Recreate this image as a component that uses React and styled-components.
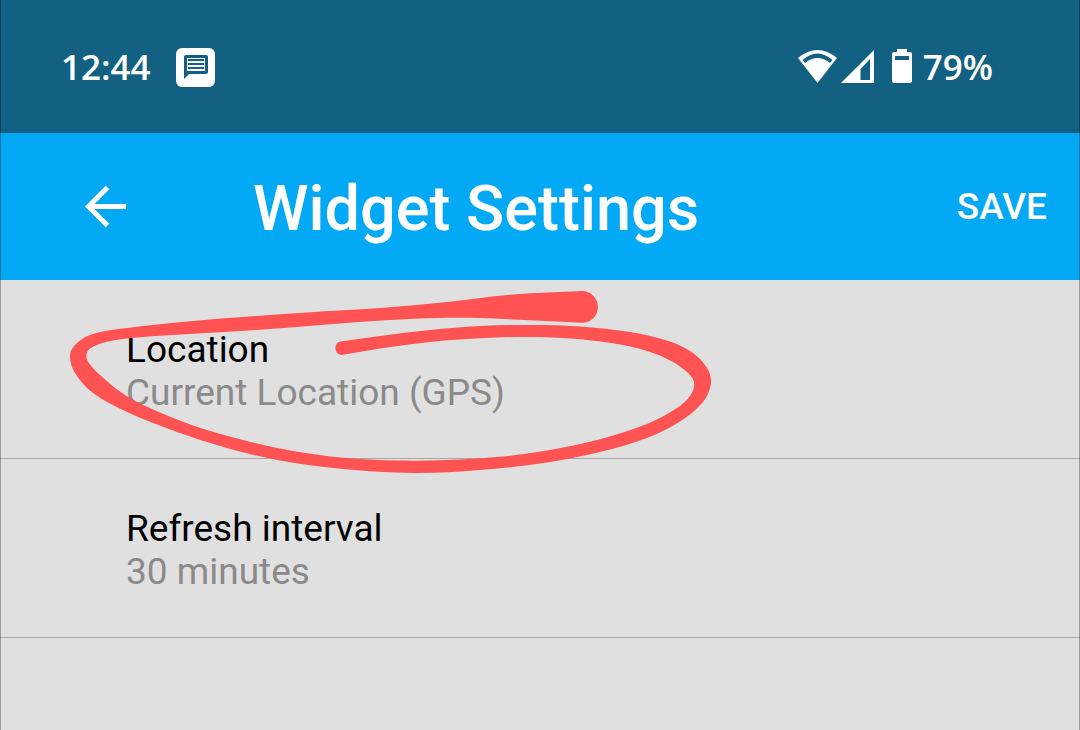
import React from "react";
import styled, { createGlobalStyle } from "styled-components";

const GlobalStyle = createGlobalStyle`
  * { box-sizing: border-box; }
  body { margin: 0; background: #e0e0e0; }
  button { border: 0; padding: 0; margin: 0; background: none; font: inherit; color: inherit; cursor: pointer; }
`;

const Screen = styled.div`
  position: relative;
  min-height: 100vh;
  display: flex;
  flex-direction: column;
  background: #e0e0e0;
  font-family: Roboto, "Liberation Sans", sans-serif;

  &::after {
    content: "";
    position: absolute;
    inset: 0;
    border: solid rgba(0, 0, 0, 0.3);
    border-width: 0 1px;
    pointer-events: none;
  }
`;

const StatusBar = styled.div`
  display: flex;
  align-items: center;
  justify-content: space-between;
  height: 133px;
  padding: 0 87px 0 61px;
  background: #126182;
  color: #fff;
  font: 600 35px/40px "Open Sans", Lato, sans-serif;
`;

const StatusGroup = styled.div`
  display: flex;
  align-items: center;
  gap: ${(p) => p.$gap}px;
`;

const AppBar = styled.header`
  display: flex;
  align-items: center;
  height: 147px;
  padding: 0 33px 0 76px;
  background: #03a9f4;
  color: #fff;
`;

const BackButton = styled.button`
  display: flex;
  width: 60px;
  height: 60px;
`;

const Title = styled.h1`
  flex: 1;
  margin: 0;
  padding: 4px 0 0 117px;
  font-size: 63px;
  line-height: 72px;
  font-weight: 500;
`;

const SaveButton = styled.button`
  && {
    font-size: 37px;
    line-height: 44px;
    font-weight: 500;
  }
`;

const List = styled.ul`
  margin: 0;
  padding: 0;
  list-style: none;
`;

const Item = styled.li`
  position: relative;
  border-bottom: 1px solid #a8a8a8;
`;

const ItemButton = styled.button`
  display: flex;
  flex-direction: column;
  width: 100%;
  && {
    padding: 48px 126px 44px;
    font-size: 37px;
    line-height: 43px;
    text-align: left;
  }
`;

const ItemLabel = styled.span`
  color: #000;
`;

const ItemValue = styled.span`
  color: #8a8a8a;
`;

const Marker = styled.svg`
  position: absolute;
  z-index: 1;
  top: 0;
  left: 60px;
  pointer-events: none;
`;

const outerEdge = [
  [582, 291], [513, 294.5], [447, 302], [380, 308], [307, 312.5], [193, 321], [127, 328],
  [93, 334], [77, 343], [70, 355], [75, 373], [93, 393], [127, 412], [177, 432],
  [227, 448], [277, 460], [343, 469], [413, 473], [480, 470], [547, 462.5],
  [600, 452], [647, 438], [680, 421.5], [703, 402], [711, 383], [707, 368], [693, 353], [670, 341.5],
  [630, 332], [580, 326.5], [530, 325], [480, 326], [430, 330], [380, 336], [340, 341.5],
];

const innerEdge = [
  [341.5, 355], [380, 348.5], [430, 342], [480, 338.3], [523, 337], [570, 338.5], [613, 343.3],
  [647, 351], [673, 362], [690, 375], [694.3, 384], [690, 396], [677, 408], [647, 424],
  [597, 440], [547, 450.5], [497, 457], [447, 460], [397, 460.5], [343, 457.7], [293, 451],
  [243, 440], [193, 425.5], [143, 405], [120, 391.5], [100, 375], [88, 361.7], [86.5, 355],
  [90, 348.5], [107, 341.7], [143, 337], [193, 333.7], [260, 329.7], [327, 324.5], [390, 320],
  [447, 317.8], [480, 318], [530, 320.3], [582, 322.8],
];

const distance = (p, q) => Math.hypot(q[0] - p[0], q[1] - p[1]);

// Unit direction of the edge at point i, taken from its two neighbours.
const direction = (points, i) => {
  const before = points[Math.max(i - 1, 0)];
  const after = points[Math.min(i + 1, points.length - 1)];
  const length = distance(before, after);
  return [(after[0] - before[0]) / length, (after[1] - before[1]) / length];
};

// Smooth cubic segments through each point of an edge.
const curve = (points) =>
  points
    .slice(0, -1)
    .map((from, i) => {
      const to = points[i + 1];
      const reach = distance(from, to) / 3;
      const d0 = direction(points, i);
      const d1 = direction(points, i + 1);
      return `C${from[0] + d0[0] * reach} ${from[1] + d0[1] * reach} ${to[0] - d1[0] * reach} ${to[1] - d1[1] * reach} ${to[0]} ${to[1]}`;
    })
    .join("");

const markerPath = `M582 291${curve(outerEdge)}A7 7 0 0 0 341.5 355${curve(innerEdge)}A15 15 0 0 0 582 291Z`;

const MessageIcon = () => (
  <svg width="40" height="40" viewBox="0 0 40 40" aria-hidden="true">
    <rect x="0" y="1" width="39" height="39" rx="6" fill="#fff" />
    <path d="M10 8h20q2 0 2 2v15q0 2-2 2H13l-5 5V10q0-2 2-2z" fill="#126182" />
    <path d="M11 11h18v13H11z" fill="#fff" />
    <path d="M12 12h16v2H12zM12 16h16v2H12zM12 20h16v2H12z" fill="#126182" />
  </svg>
);

const WifiIcon = () => (
  <svg width="40" height="34" viewBox="0 0 40 34" aria-hidden="true">
    <path d="M0 8Q19.500 -8 39 8L19.500 33z" fill="#fff" />
    <path d="M4.500 10Q19.500 -3 34.500 10L32 13Q19.500 3 7 13z" fill="#126182" />
  </svg>
);

const SignalIcon = () => (
  <svg width="33" height="34" viewBox="0 0 33 34" aria-hidden="true">
    <path d="M33 0v33H0z" fill="#fff" />
    <path d="M29 9v21H19.500V19z" fill="#126182" />
  </svg>
);

const BatteryIcon = () => (
  <svg width="20" height="36" viewBox="0 0 20 36" aria-hidden="true">
    <path d="M5 0h10v3h3q2 0 2 2v27q0 2-2 2H2q-2 0-2-2V5q0-2 2-2h3z" fill="#fff" />
    <path d="M3 7h14v4H3z" fill="#126182" />
  </svg>
);

const settings = [
  { label: "Location", value: "Current Location (GPS)", marked: true },
  { label: "Refresh interval", value: "30 minutes" },
];

export default function App() {
  return (
    <>
      <GlobalStyle />
      <Screen>
        <StatusBar>
          <StatusGroup $gap={25}>
            <span>12:44</span>
            <MessageIcon />
          </StatusGroup>
          <StatusGroup $gap={18}>
            <StatusGroup $gap={3}>
              <WifiIcon />
              <SignalIcon />
            </StatusGroup>
            <StatusGroup $gap={11}>
              <BatteryIcon />
              <span>79%</span>
            </StatusGroup>
          </StatusGroup>
        </StatusBar>
        <AppBar>
          <BackButton type="button" aria-label="Back">
            <svg width="60" height="60" viewBox="0 0 60 60" fill="none" stroke="#fff" strokeWidth="5" aria-hidden="true">
              <path d="M50 29.500H13M31.500 10.500L12.500 29.500L31.500 48.500" />
            </svg>
          </BackButton>
          <Title>Widget Settings</Title>
          <SaveButton type="button">SAVE</SaveButton>
        </AppBar>
        <List>
          {settings.map((item) => (
            <Item key={item.label}>
              <ItemButton type="button">
                <ItemLabel>{item.label}</ItemLabel>
                <ItemValue>{item.value}</ItemValue>
              </ItemButton>
              {item.marked && (
                <Marker width="660" height="200" viewBox="60 280 660 200" aria-hidden="true">
                  <path d={markerPath} fill="#ff5252" />
                </Marker>
              )}
            </Item>
          ))}
        </List>
      </Screen>
    </>
  );
}
